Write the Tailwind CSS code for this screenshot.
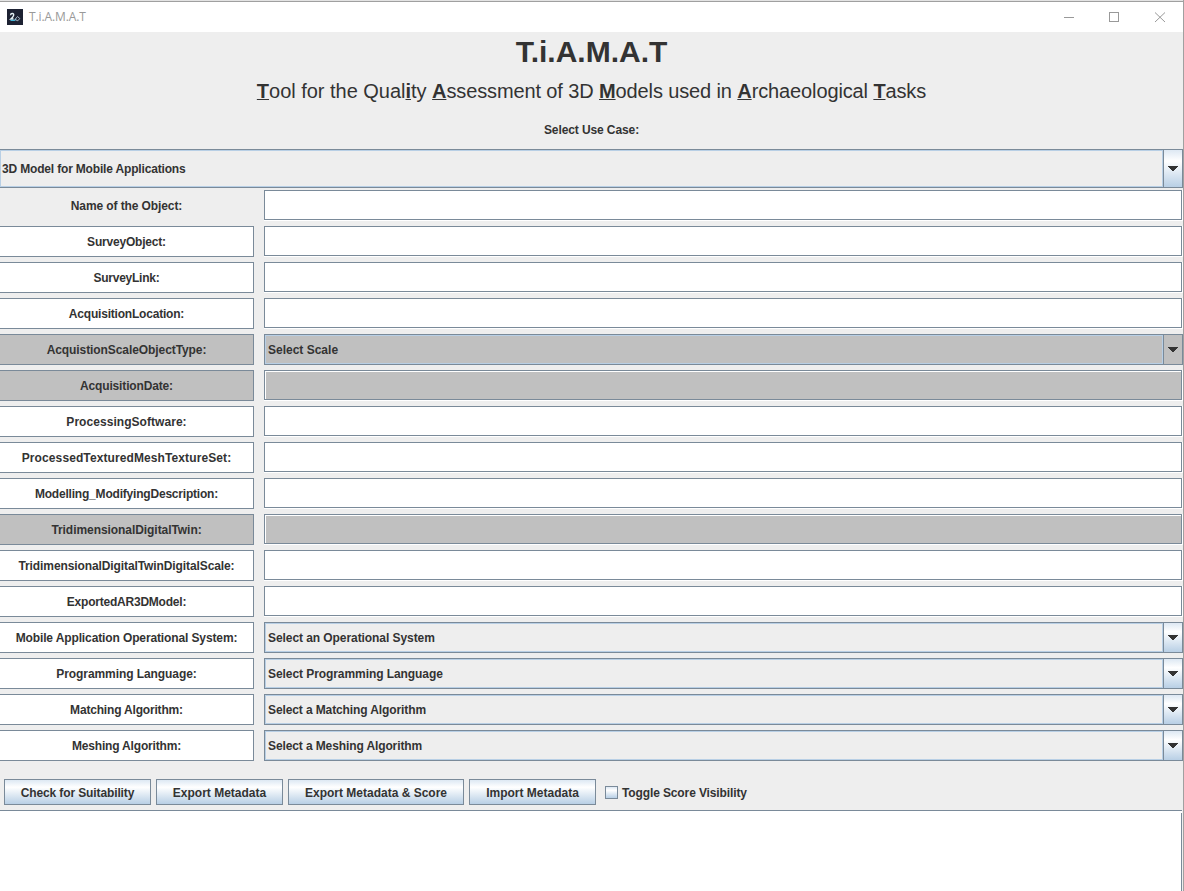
<!DOCTYPE html>
<html lang="en">
<head>
<meta charset="utf-8">
<title>T.i.A.M.A.T</title>
<script src="https://cdn.jsdelivr.net/npm/@tailwindcss/browser@4"></script>
</head>
<body class="w-[1184px] h-[891px] overflow-hidden bg-[#eee] text-[#333] font-['Liberation_Sans',Arial,sans-serif] text-[12px] leading-[14px] font-bold">
<div class="w-[1184px] h-[891px] flex flex-col overflow-hidden border-r border-[#a0a0a0]">
  <div class="h-px shrink-0 bg-[#e3e3e3]"></div>
  <header class="h-[31px] shrink-0 border-t border-[#a0a0a0] bg-white flex items-center pl-[7px] font-normal">
    <svg class="size-4" viewBox="0 0 16 16"><rect width="16" height="16" fill="#1d2233"/><path d="M3.5 6.2Q3.7 4.4 5.3 4.5Q7.2 4.7 6.6 6.5Q6 8.200 3.8 10H6.500" fill="none" stroke="#e8f4f8" stroke-width="1.3"/><path d="M3.500 11.400H7.500L9 9.800" fill="none" stroke="#45b5d8" stroke-width="1.2"/><path d="M8 10.500L10.500 7.500L12.800 9.500L10.800 11.800Z" fill="none" stroke="#a9b9c8" stroke-width="1"/></svg>
    <span class="ml-[6px] tracking-[-0.1px] text-[12px] text-[#999] font-['Open_Sans',sans-serif]">T.i.A.M.A.T</span>
    <div class="ml-auto flex">
      <svg class="w-[120px] h-[29px]" viewBox="0 0 120 29" fill="none" stroke="#999" shape-rendering="crispEdges"><path d="M1 14.5H11"/><rect x="46.5" y="9.500" width="9" height="9"/><path shape-rendering="auto" d="M92 9.500L102 19M102 9.500L92 19"/></svg>
    </div>
  </header>
  <section class="h-[117px] shrink-0 flex flex-col items-center">
    <h1 class="mt-[2px] text-[30px] leading-[36px]">T.i.A.M.A.T</h1>
    <p class="mt-[9px] text-[20px] leading-[24px] font-normal whitespace-nowrap tracking-[-0.12px] [text-decoration-skip-ink:none]"><span class="tracking-[-0.02px]"><b class="underline decoration-1 underline-offset-1">T</b>ool for the Qual<b class="underline decoration-1 underline-offset-1">i</b>ty </span><b class="underline decoration-1 underline-offset-1">A</b>ssessment of 3D <b class="underline decoration-1 underline-offset-1">M</b>odels used in <b class="underline decoration-1 underline-offset-1">A</b>rchaeological <b class="underline decoration-1 underline-offset-1">T</b>asks</p>
    <p class="mt-[20px] tracking-[-0.1px]">Select Use Case:</p>
  </section>
  <div class="h-[39px] shrink-0 border-y border-[#7a8a99] flex">
    <div class="w-[1163px] border border-[#b8cfe5] flex items-center pl-px tracking-[-0.17px]">3D Model for Mobile Applications</div>
    <div class="w-5 border-x border-[#7a8a99] bg-linear-to-b from-[#dde8f3] via-white via-30% to-[#b8cfe5] flex items-center justify-center"><svg class="w-[10px] h-[5px]" viewBox="0 0 10 5" fill="#333" shape-rendering="crispEdges"><path d="M0 0H10V1H9V2H8V3H7V4H6V5H4V4H3V3H2V2H1V1H0Z"/></svg></div>
  </div>
  <main id="rows" class="mt-[2px] h-[571px] shrink-0 flex flex-col gap-[5px]"></main>
  <div class="mt-[18px] h-[26px] shrink-0 flex pl-1 gap-[5px]">
    <button class="w-[147px] pt-[2px] tracking-[-0.12px] border border-[#7a8a99] bg-linear-to-b from-[#dde8f3] via-white via-30% to-[#b8cfe5]">Check for Suitability</button>
    <button class="w-[127px] pt-[2px] border border-[#7a8a99] bg-linear-to-b from-[#dde8f3] via-white via-30% to-[#b8cfe5]">Export Metadata</button>
    <button class="w-[176px] pt-[2px] border border-[#7a8a99] bg-linear-to-b from-[#dde8f3] via-white via-30% to-[#b8cfe5]">Export Metadata &amp; Score</button>
    <button class="w-[127px] pt-[2px] border border-[#7a8a99] bg-linear-to-b from-[#dde8f3] via-white via-30% to-[#b8cfe5]">Import Metadata</button>
    <label class="ml-1 flex items-center gap-1"><span class="size-[13px] border border-[#7a8a99] bg-linear-to-b from-[#dde8f3] via-white via-30% to-[#b8cfe5]"></span><span class="pt-[2px] tracking-[-0.12px]">Toggle Score Visibility</span></label>
  </div>
  <div class="mt-[5px] w-[1182px] h-[81px] shrink-0 border-t border-[#7a8a99] bg-white flex justify-end"><div class="mt-[2px] w-px bg-[#7a8a99]"></div></div>
</div>
<script>
// [label, selected value, kind, label tracking, value tracking]
const rows = [
  ["Name of the Object:", "", "plain", "tracking-[-0.1px]"],
  ["SurveyObject:", "", "", "tracking-[-0.2px]"],
  ["SurveyLink:", "", "", "tracking-[-0.25px]"],
  ["AcquisitionLocation:", "", "", "tracking-[-0.2px]"],
  ["AcquistionScaleObjectType:", "Select Scale", "gray", "tracking-[-0.08px]", ""],
  ["AcquisitionDate:", "", "gray", "tracking-[-0.15px]"],
  ["ProcessingSoftware:", "", "", "tracking-[0.05px]"],
  ["ProcessedTexturedMeshTextureSet:", "", "", "tracking-[0.1px]"],
  ["Modelling_ModifyingDescription:", "", "", "tracking-[-0.2px]"],
  ["TridimensionalDigitalTwin:", "", "gray", "tracking-[-0.06px]"],
  ["TridimensionalDigitalTwinDigitalScale:", "", "", "tracking-[-0.1px]"],
  ["ExportedAR3DModel:", "", "", "tracking-[-0.22px]"],
  ["Mobile Application Operational System:", "Select an Operational System", "", "tracking-[-0.12px]", "tracking-[-0.07px]"],
  ["Programming Language:", "Select Programming Language", "", "tracking-[-0.08px]", "tracking-[-0.07px]"],
  ["Matching Algorithm:", "Select a Matching Algorithm", "", "tracking-[-0.18px]", "tracking-[-0.11px]"],
  ["Meshing Algorithm:", "Select a Meshing Algorithm", "", "tracking-[-0.18px]", "tracking-[-0.11px]"]
];
const arrow = '<svg class="w-[10px] h-[5px]" viewBox="0 0 10 5" fill="#333" shape-rendering="crispEdges"><path d="M0 0H10V1H9V2H8V3H7V4H6V5H4V4H3V3H2V2H1V1H0Z"/></svg>';
document.getElementById("rows").innerHTML = rows.map(([label, value, kind, lt, vt]) => {
  const gray = kind === "gray";
  const box = kind === "plain" ? "border-transparent" : gray ? "border-[#7a8a99] bg-[#c0c0c0]" : "border-[#7a8a99] bg-white";
  const left = `<div class="w-[254px] border border-l-0 ${box} flex items-center justify-center"><span class="${lt}">${label}</span></div>`;
  const right = value
    ? `<div class="w-[919px] border border-[#7a8a99] ${gray ? "bg-[#c0c0c0]" : ""} flex"><div class="w-[898px] border border-[#b8cfe5] flex items-center pl-[2px]"><span class="${vt}">${value}</span></div><div class="w-[19px] border-l border-[#7a8a99] ${gray ? "" : "bg-linear-to-b from-[#dde8f3] via-white via-30% to-[#b8cfe5]"} flex items-center justify-center">${arrow}</div></div>`
    : `<div class="w-[919px] border-r border-b border-white flex"><div class="flex-1 border border-[#7a8a99] ${gray ? "bg-[#c0c0c0]" : "bg-white"} flex"><div class="flex-1 border-t border-l border-white"></div></div></div>`;
  return `<div class="h-[31px] shrink-0 flex gap-[10px]">${left}${right}</div>`;
}).join("");
</script>
</body>
</html>
